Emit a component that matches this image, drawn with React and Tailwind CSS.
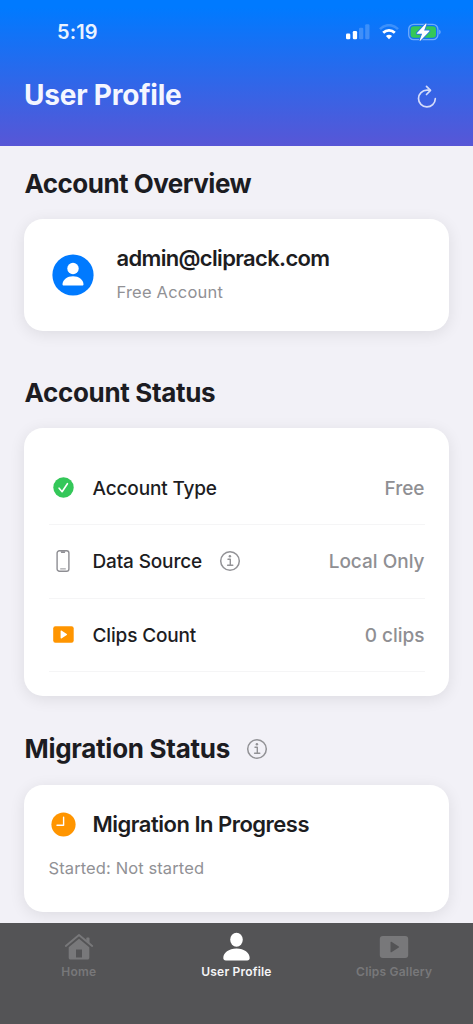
import React from "react";

const StatusBar = () => (
  <div className="flex h-[63px] items-center justify-between pl-[57px] pr-8">
    <span className="text-[20px] font-semibold tracking-[0.1px] text-[#e9f3ff]">5:19</span>
    <div className="flex items-center">
      <svg className="mr-[9px] h-4 w-6" viewBox="0 0 24 16">
        <rect x="0" y="9.5" width="4.3" height="5.7" rx="1.2" fill="#fff" />
        <rect x="6.8" y="7" width="4.3" height="8.2" rx="1.2" fill="#fff" />
        <rect x="13" y="3.8" width="4.3" height="11.4" rx="1.2" fill="#fff" opacity="0.2" />
        <rect x="19.2" y="0.3" width="4.3" height="14.9" rx="1.2" fill="#fff" opacity="0.2" />
      </svg>
      <svg className="mr-[9px] h-4 w-5" viewBox="0 0 20 16" fill="none">
        <path d="M1 5.2C6-.2 14-.2 19 5.2" stroke="#fff" strokeWidth="2.6" opacity="0.2" />
        <path d="M4.2 8.8C7.5 5.5 12.5 5.5 15.8 8.8" stroke="#fff" strokeWidth="2.7" />
        <path d="M6.9 11.9c1.8-1.7 4.4-1.7 6.2 0L10 15.2z" fill="#fff" />
      </svg>
      <svg className="h-[18px] w-[33px]" viewBox="0 0 33 18">
        <rect x="0.7" y="1.3" width="29.2" height="15.4" rx="5" fill="none" stroke="#fff" strokeOpacity="0.4" strokeWidth="1.3" />
        <rect x="2.6" y="3.2" width="25.4" height="11.6" rx="3.3" fill="#34c759" />
        <path d="M31.2 6.6c1.9.8 1.9 4 0 4.8z" fill="#fff" opacity="0.4" />
        <path d="M17.6.8L9 9.9c-.4.5-.2.9.4.9h4.7l-2.4 6.4c-.2.6.4.8.8.3l8.7-9.1c.5-.5.3-.9-.3-.9h-4.8l2.4-6.2c.2-.7-.4-1-.9-.5z" fill="#fff" stroke="#2877e4" strokeWidth="1.8" paintOrder="stroke" />
      </svg>
    </div>
  </div>
);

const InfoIcon = ({ className }) => (
  <svg className={className} viewBox="0 0 22 22" fill="none" stroke="#929296">
    <circle cx="11" cy="11" r="9.3" strokeWidth="1.5" />
    <circle cx="10.9" cy="6.3" r="1.25" fill="#929296" stroke="none" />
    <path d="M9 9.2h2.3v6M8.6 15.3h5.2" strokeWidth="1.4" strokeLinecap="round" strokeLinejoin="round" />
  </svg>
);

const CheckIcon = () => (
  <svg className="size-[21px]" viewBox="0 0 21 21">
    <circle cx="10.5" cy="10.5" r="10.2" fill="#34c759" />
    <path d="M6.1 11.2l3 3.5 5.3-8" fill="none" stroke="#fff" strokeWidth="1.6" strokeLinecap="round" strokeLinejoin="round" />
  </svg>
);

const PhoneIcon = () => (
  <svg className="h-[22px] w-[14px]" viewBox="0 0 14 22" fill="none" stroke="#8e8e93">
    <rect x="1.1" y="0.8" width="11.8" height="20.4" rx="2.3" strokeWidth="1.4" />
    <path d="M4.6 1.2c.2 1.4.6 1.8 1.2 1.8h2.4c.6 0 1-.4 1.2-1.8z" fill="#8e8e93" stroke="none" />
    <path d="M4.6 18.9h4.8" strokeWidth="1" strokeLinecap="round" />
  </svg>
);

const PlayIcon = () => (
  <svg className="h-[17px] w-[21px]" viewBox="0 0 21 17">
    <rect x="0.2" y="0.3" width="20.5" height="16.4" rx="2.2" fill="#ff9500" />
    <path d="M7.6 5v7c0 .4.4.6.8.4l5.4-3.5c.3-.2.3-.6 0-.8L8.4 4.6c-.4-.2-.8 0-.8.4z" fill="#fff" />
  </svg>
);

const Row = ({ icon, label, value, info }) => (
  <div className="flex h-[73.5px] items-center border-b-[1.5px] border-[#f5f5f6]">
    <div className="flex w-[29px] justify-center">{icon}</div>
    <span className="ml-[15px] mt-0.5 text-[19px] font-medium tracking-[-0.15px] text-[#1d1d1f]">{label}</span>
    {info && <InfoIcon className="ml-[16.5px] size-[22px]" />}
    <span className="ml-auto mt-0.5 text-[19px] font-medium text-[#8f8f93]">{value}</span>
  </div>
);

const App = () => {
  return (
    <div className="flex h-[1024px] w-full flex-col overflow-hidden bg-[#f2f1f7] font-['Inter',sans-serif]">
      <header className="h-[145.5px] shrink-0 bg-linear-to-b/srgb from-[#007aff] from-5% to-[#5856d6]">
        <StatusBar />
        <div className="flex h-16 items-center justify-between pl-6 pr-9">
          <h1 className="text-[28px] font-bold tracking-[-0.22px] text-[#f4f6ff]">User Profile</h1>
          <svg className="mt-1 h-6 w-5" viewBox="0 0 20 24" fill="none" stroke="#d5dcfa" strokeWidth="1.7" strokeLinecap="round" strokeLinejoin="round">
            <path d="M18.3 13.7a8.4 8.4 0 1 1-8.4-8.6h2.9" />
            <path d="M9.5 1.3l4 4.1-4 4.1" />
          </svg>
        </div>
      </header>

      <main className="flex h-[777.5px] shrink-0 flex-col px-6">
        <h2 className="mt-[22.5px] h-8 pl-[0.5px] text-[26px] leading-8 font-bold tracking-[-0.52px] text-[#1c1c22]">Account Overview</h2>
        <section className="mt-[18.5px] flex h-[112px] shrink-0 items-center rounded-[19px] bg-white pl-[27.5px] shadow-[0_3px_16px_rgba(0,0,0,0.09)]">
          <svg className="size-[42px]" viewBox="0 0 42 42">
            <circle cx="21" cy="21" r="20.6" fill="#007aff" />
            <circle cx="21" cy="14.5" r="5.7" fill="#fff" />
            <path d="M10.5 30.2c.3-4.7 4.7-8 10.5-8s10.2 3.3 10.5 8c0 .8-.4 1.3-1.2 1.3H11.7c-.8 0-1.2-.5-1.2-1.3z" fill="#fff" />
          </svg>
          <div className="-mt-0.5 ml-[23px]">
            <p className="h-7 text-[22px] leading-7 font-semibold tracking-[-0.67px] text-[#1d1d1f]">admin@cliprack.com</p>
            <p className="mt-2 h-6 text-[16.5px] leading-6 tracking-[0.2px] text-[#919195]">Free Account</p>
          </div>
        </section>

        <h2 className="mt-[46px] h-8 pl-[0.5px] text-[26px] leading-8 font-bold tracking-[-0.33px] text-[#1c1c22]">Account Status</h2>
        <section className="mt-[19px] h-[268px] shrink-0 rounded-[19px] bg-white px-[24.5px] pt-6 shadow-[0_3px_16px_rgba(0,0,0,0.09)]">
          <Row icon={<CheckIcon />} label="Account Type" value="Free" />
          <Row icon={<PhoneIcon />} label="Data Source" value="Local Only" info />
          <Row icon={<PlayIcon />} label="Clips Count" value="0 clips" />
        </section>

        <div className="mt-[37px] flex h-8 items-center">
          <h2 className="pl-[0.5px] text-[26px] leading-8 font-bold tracking-[-0.28px] text-[#1c1c22]">Migration Status</h2>
          <InfoIcon className="ml-4 size-[22px]" />
        </div>
        <section className="mt-5 h-[127.5px] shrink-0 rounded-[19px] bg-white px-[24.5px] pt-6 shadow-[0_3px_16px_rgba(0,0,0,0.09)]">
          <div className="flex h-8 items-center">
            <svg className="ml-0.5 size-[25px]" viewBox="0 0 25 25">
              <circle cx="12.5" cy="12.5" r="12.1" fill="#ff9500" />
              <path d="M12.6 5.2v8H6" fill="none" stroke="#fff" strokeWidth="1.4" strokeLinecap="round" strokeLinejoin="round" />
            </svg>
            <p className="ml-[17px] text-[22px] font-semibold tracking-[-0.5px] text-[#1d1d1f]">Migration In Progress</p>
          </div>
          <p className="mt-[15px] h-6 text-[16.5px] leading-6 tracking-[0.11px] text-[#919195]">Started: Not started</p>
        </section>
      </main>

      <nav className="grid h-[101px] shrink-0 grid-cols-3 bg-[#545456] text-center text-[12px] leading-4 font-semibold text-[#78787a]">
        <div className="flex flex-col items-center pt-[9px]">
          <svg className="h-[30px] w-[30px]" viewBox="0 0 30 30" fill="#78787a">
            <path d="M15 6.8L4.7 15.2v10.5c0 1.1.7 1.9 1.8 1.9h17c1.1 0 1.8-.8 1.8-1.9V15.2zM12 17.500h6v8h-6z" fillRule="evenodd" />
            <path d="M1.8 14L15 3l13.2 11" fill="none" stroke="#78787a" strokeWidth="1.9" strokeLinecap="round" strokeLinejoin="round" />
            <path d="M22.3 6.2c0-.5.3-.8.8-.8h1.6c.5 0 .8.3.8.8v5l-3.2-2.6z" />
          </svg>
          <span className="mt-0.5 tracking-[0.2px]">Home</span>
        </div>
        <div className="flex flex-col items-center pt-[9px] text-[#f5f5f6]">
          <svg className="h-[30px] w-[30px]" viewBox="0 0 30 30" fill="#fff">
            <ellipse cx="15.5" cy="7.8" rx="6.3" ry="7" />
            <path d="M2.3 26c0-5 5.5-9.4 13.2-9.4S28.7 21 28.7 26c0 1.7-.9 2.4-2.5 2.4H4.8c-1.6 0-2.5-.7-2.5-2.4z" />
          </svg>
          <span className="mt-0.5 tracking-[0.2px]">User Profile</span>
        </div>
        <div className="flex flex-col items-center pt-[9px]">
          <svg className="h-[30px] w-[30px]" viewBox="0 0 30 30">
            <rect x="0.8" y="4" width="28.4" height="22" rx="3" fill="#78787a" />
            <path d="M11.5 10.2v9.6c0 .5.5.7.9.4l7.4-4.7c.4-.3.4-.7 0-1l-7.4-4.7c-.4-.3-.9-.1-.9.4z" fill="#545456" />
          </svg>
          <span className="mt-0.5 tracking-[0.2px]">Clips Gallery</span>
        </div>
      </nav>
    </div>
  );
};

export default App;
